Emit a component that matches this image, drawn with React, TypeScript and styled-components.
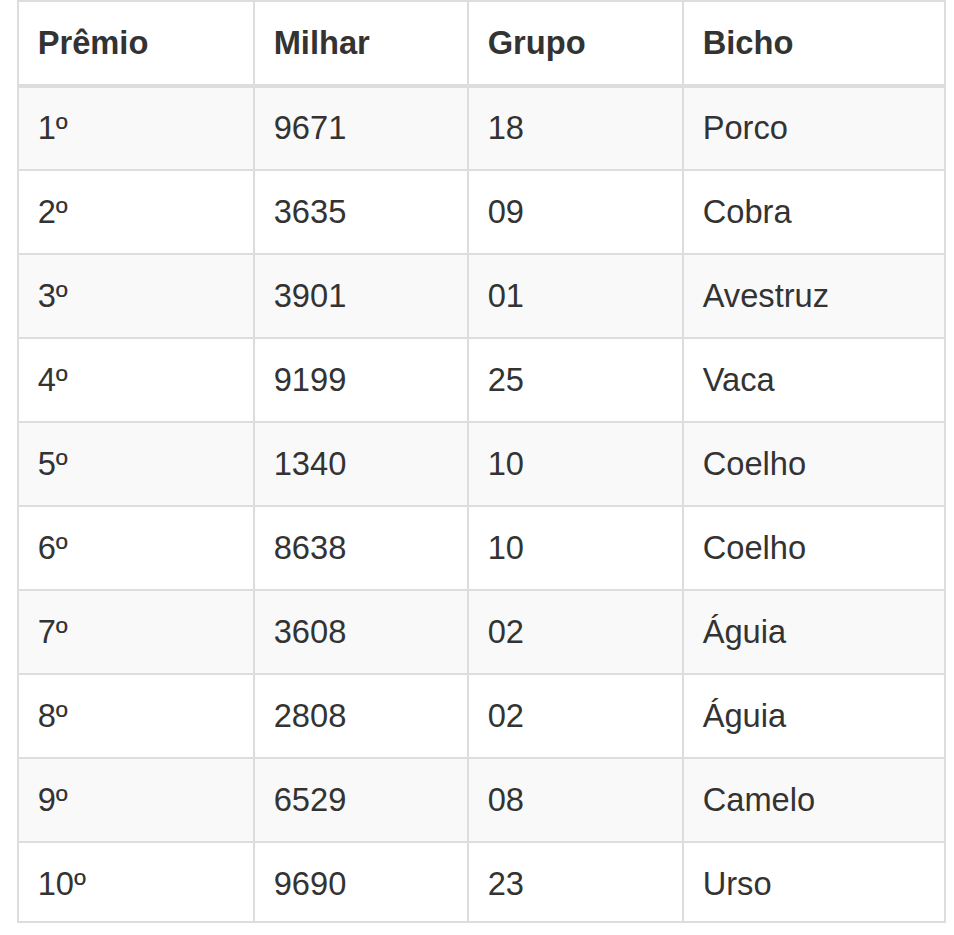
import React from "react";
import styled, { createGlobalStyle } from "styled-components";

const GlobalStyle = createGlobalStyle`
  html, body {
    margin: 0;
    padding: 0;
    background: #ffffff;
  }
  body {
    font-family: "Liberation Sans", Arial, Helvetica, sans-serif;
    color: #333333;
  }
`;

const Page = styled.div`
  padding: 0 0 0 17px;
`;

const Table = styled.table`
  width: 927px;
  border-collapse: collapse;
  border-spacing: 0;
  table-layout: fixed;
  border: 2px solid #dddddd;
  font-size: 32.67px;
  line-height: 46px;
  color: #333333;

  tbody tr:first-child td {
    padding-top: 17px;
  }

  tbody tr:last-child td {
    padding-bottom: 14px;
  }
`;

const HeadCell = styled.th`
  text-align: left;
  font-weight: bold;
  padding: 18px 18.67px;
  vertical-align: bottom;
  border: 2px solid #dddddd;
  border-bottom: 4px solid #dddddd;
`;

const Row = styled.tr<{ $striped: boolean }>`
  background: ${(p) => (p.$striped ? "#f9f9f9" : "#ffffff")};
`;

const Cell = styled.td`
  padding: 18px 18.67px;
  vertical-align: top;
  border: 2px solid #dddddd;
`;

const columns = [
  { label: "Prêmio", width: 236 },
  { label: "Milhar", width: 214 },
  { label: "Grupo", width: 215 },
  { label: "Bicho", width: 262 },
];

const rows: [string, string, string, string][] = [
  ["1º", "9671", "18", "Porco"],
  ["2º", "3635", "09", "Cobra"],
  ["3º", "3901", "01", "Avestruz"],
  ["4º", "9199", "25", "Vaca"],
  ["5º", "1340", "10", "Coelho"],
  ["6º", "8638", "10", "Coelho"],
  ["7º", "3608", "02", "Águia"],
  ["8º", "2808", "02", "Águia"],
  ["9º", "6529", "08", "Camelo"],
  ["10º", "9690", "23", "Urso"],
];

export default function App() {
  return (
    <>
      <GlobalStyle />
      <Page>
        <Table>
          <colgroup>
            {columns.map((c) => (
              <col key={c.label} style={{ width: c.width }} />
            ))}
          </colgroup>
          <thead>
            <tr>
              {columns.map((c) => (
                <HeadCell key={c.label}>{c.label}</HeadCell>
              ))}
            </tr>
          </thead>
          <tbody>
            {rows.map((r, i) => (
              <Row key={r[0]} $striped={i % 2 === 0}>
                {r.map((v, j) => (
                  <Cell key={j}>{v}</Cell>
                ))}
              </Row>
            ))}
          </tbody>
        </Table>
      </Page>
    </>
  );
}
